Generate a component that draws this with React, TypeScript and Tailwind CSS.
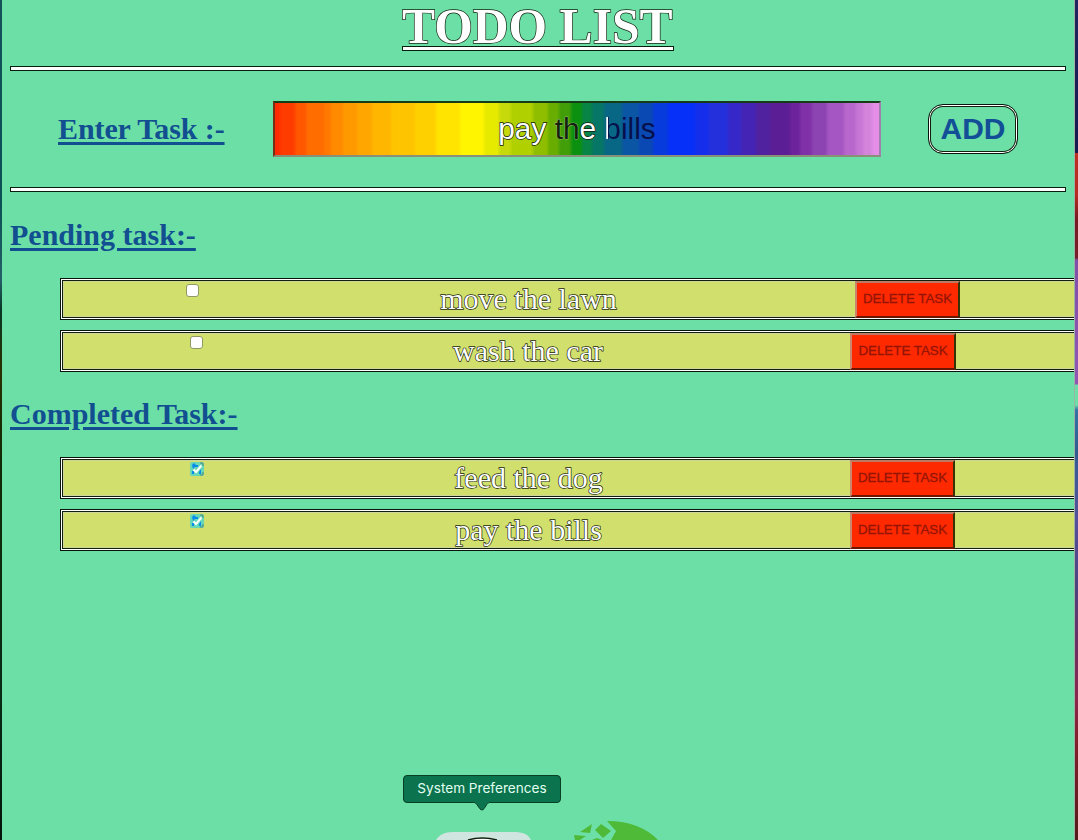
import React from "react";

const bands: [number, string][] = [
  [0, "#ff2a00"], [7, "#ff3c00"], [22, "#ff5600"], [33, "#ff6c00"], [51, "#ff7900"],
  [58, "#ff8a00"], [70, "#ff9900"], [84, "#ffa700"], [99, "#ffb600"], [118, "#ffc400"],
  [142, "#ffd000"], [163, "#ffe400"], [187, "#fff500"], [211, "#e6ea00"], [226, "#c6d90a"],
  [238, "#b0d000"], [260, "#8fbe00"], [275, "#68ad00"], [286, "#429e08"], [298, "#0b9010"],
  [309, "#088447"], [319, "#067666"], [331, "#086784"], [349, "#0a55a4"], [366, "#0a48b4"],
  [380, "#083bdc"], [395, "#0630f8"], [422, "#142eec"], [436, "#2430dc"], [455, "#3628c8"],
  [468, "#4324b4"], [483, "#50229f"], [497, "#5c1e94"], [517, "#6c239c"], [527, "#8031a8"],
  [539, "#8d44b3"], [554, "#a556c2"], [571, "#b868cc"], [583, "#c676d4"], [590, "#d584dc"],
  [599, "#e48ee8"],
];

const rainbow = `linear-gradient(to right, ${bands
  .map(([x, c], i) => `${c} ${x + 2}px ${(i + 1 < bands.length ? bands[i + 1][0] : 608) - 2}px`)
  .join(", ")})`;

const outlined = "text-white [-webkit-text-stroke:1.4px_#10200c] [paint-order:stroke_fill]";
const heading =
  "text-[30px] leading-[34px] font-bold text-[#114f91] underline decoration-[#114f91] decoration-[3px] underline-offset-[3px]";

function Rule() {
  return <div className="mx-[10px] h-[5px] shrink-0 border border-[#06200d] bg-white" />;
}

function Check({ done }: { done: boolean }) {
  if (!done)
    return <span className="h-[13px] w-[13px] rounded-[3px] border border-[#8f9a62] bg-white" />;
  return (
    <svg width="14" height="14" viewBox="0 0 14 14" className="-mt-px rounded-[2px]">
      <rect width="14" height="14" fill="#68d7b5" />
      <path d="M2 3l2-2 2 2h2v2H5l-2 2zM2 9h2v3H2zM9 10l2-3v5H9z" fill="#078bed" />
      <path d="M10 1h3v3M13 10v3h-3" fill="none" stroke="#53877d" />
      <path d="M3.5 7.5L6 10L11.5 3.5" fill="none" stroke="white" strokeWidth="2" />
    </svg>
  );
}

type TaskProps = { text: string; done?: boolean; cols: string; buttonWidth?: string };

function Task({ text, done = false, cols, buttonWidth = "w-[105px]" }: TaskProps) {
  return (
    <div
      className={`ml-[60px] grid h-[42px] w-[1018px] items-start border border-[#07150a] shadow-[inset_0_0_0_1px_white,inset_0_0_0_2px_#10200c,inset_0_0_0_3px_#d2d59a] bg-[#d1df6d] ${cols}`}
    >
      <div className="flex justify-end pt-[5px]"><Check done={done} /></div>
      <div
        className="pt-[2px] pl-[3px] text-center text-[30px] leading-[36px] whitespace-nowrap text-white [-webkit-text-stroke:1.4px_#20280e] [paint-order:stroke_fill]"
      >
        {text}
      </div>
      <button
        className={`mt-[2px] h-[37px] ${buttonWidth} border-2 border-t-[#bd7963] border-r-[#343407] border-b-[#6b1700] border-l-[#c9866c] bg-[#ff2900] p-0 pb-[2px] font-['Liberation_Sans',sans-serif] text-[13.33px] text-[#941505] whitespace-nowrap [-webkit-text-stroke:0.3px_#941505]`}
      >
        DELETE TASK
      </button>
    </div>
  );
}

export default function App() {
  return (
    <div className="flex h-[840px] w-[1078px] overflow-hidden bg-[#6cdfa7] font-['Liberation_Serif',serif]">
      <div className="h-full w-[2px] shrink-0 bg-[linear-gradient(#13515b_0px,#0b4f57_200px,#246068_280px,#073825_310px,#293100_370px,#102a06_460px,#072b16_700px,#05150c_840px)]" />
      <main className="-ml-[2px] flex h-full w-[1075px] shrink-0 flex-col">
        <h1 className="flex h-[66px] justify-center pl-px">
          <span className={`relative h-[51px] w-[272px] whitespace-nowrap text-[49.6px] leading-[54px] font-bold ${outlined}`}>
            TODO LIST
            <span className="absolute top-[46px] left-0 h-[5px] w-[272px] border border-[#06200d] bg-white" />
          </span>
        </h1>
        <div className="flex w-[1076px] flex-col">
          <Rule />
          <section className="flex h-[116px] items-start">
            <h2 className={`ml-[58px] mt-[41px] w-[215px] whitespace-nowrap tracking-[-0.1px] ${heading}`}>Enter Task :-</h2>
            <div
              className="mt-[30px] flex h-[56px] w-[608px] items-center justify-center border-2 border-t-[#173b16] border-r-[#a17fad] border-b-[#889078] border-l-[#783014] bg-origin-border font-['Liberation_Sans',sans-serif] text-[29.8px] leading-none whitespace-pre text-[#06104c]"
              style={{ backgroundImage: rainbow }}
            >
              <span className={outlined}>pay </span>
              <span className="text-[#142009] [-webkit-text-stroke:0.5px_#d7dfba] [paint-order:stroke_fill]">th</span>
              <span className={outlined}>e </span>
              <span className="bg-[linear-gradient(90deg,white_4px,#06104c_4px)] bg-clip-text text-transparent">b</span>
              <span>ills</span>
            </div>
            <button className="ml-[47px] mt-[33px] h-[50px] w-[90px] rounded-[15px] border border-[#07150a] bg-[#6cdfa7] shadow-[inset_0_0_0_1px_white,inset_0_0_0_2px_#10200c] pb-px font-['Liberation_Sans',sans-serif] text-[30px] leading-none font-bold text-[#124f97]">
              ADD
            </button>
          </section>
          <Rule />
        </div>
        <h2 className={`ml-[10px] mt-[26px] h-[34px] ${heading}`}>Pending task:-</h2>
        <div className="mt-[26px] flex flex-col gap-[10px]">
          <Task text="move the lawn" cols="grid-cols-[138px_656px_1fr]" />
          <Task text="wash the car" cols="grid-cols-[142px_647px_1fr]" buttonWidth="w-[106px]" />
        </div>
        <h2 className={`ml-[10px] mt-[25px] h-[34px] ${heading}`}>Completed Task:-</h2>
        <div className="mt-[26px] flex flex-col gap-[10px]">
          <Task text="feed the dog" done cols="grid-cols-[143px_646px_1fr]" />
          <Task text="pay the bills" done cols="grid-cols-[143px_646px_1fr]" />
        </div>
      </main>
      <div className="z-10 -ml-[1px] h-full w-[4px] shrink-0 border-l border-[#9db1a4] bg-[linear-gradient(#20255d_0px,#15194c_153px,#bc3022_153px,#b52c22_195px,#721b21_220px,#75202a_258px,#8050a7_260px,#9057b3_384px,#6cdfa7_385px,#6cdfa7_405px,#3472a5_410px,#315d91_450px,#56509a_520px,#4d427a_590px,#683064_640px,#87284b_700px,#80202b_740px,#521b1b_840px)]" />
      <div className="absolute top-[775px] left-[403px] flex h-[28px] w-[158px] items-center justify-center rounded-[4px] border border-[#083f25] bg-[#0b734d] pb-px font-['Inter',sans-serif] text-[13.6px] text-[#e1fff1] whitespace-nowrap">
        System Preferences
        <svg className="absolute top-[26px] left-[69px]" width="18" height="9" viewBox="0 0 18 9">
          <path d="M0 0C4 0 6 8 9 8S13 0 18 0" fill="#0b734d" stroke="#083f25" />
          <path d="M2 0h14" stroke="#0b734d" strokeWidth="2" />
        </svg>
      </div>
      <svg className="absolute top-[820px] left-[430px]" width="240" height="20" viewBox="0 0 240 20">
        <path d="M6 20C9 15 14 12 23 12H83C93 12 98 14 101 20z" fill="#d0e5df" />
        <path d="M38 20Q52 16 67 20" fill="white" stroke="#10200c" strokeWidth="1.5" />
        <path d="M177 1C199 1 217 8 228 20H181L186 11z" fill="#4fba37" />
        <path d="M165 10l6-6 10 7-8 7zM150 12l12-8-2 9zM144 15l12 1-6 4h-5zM162 20l5-2 5 2z" fill="#4fba37" />
      </svg>
    </div>
  );
}
